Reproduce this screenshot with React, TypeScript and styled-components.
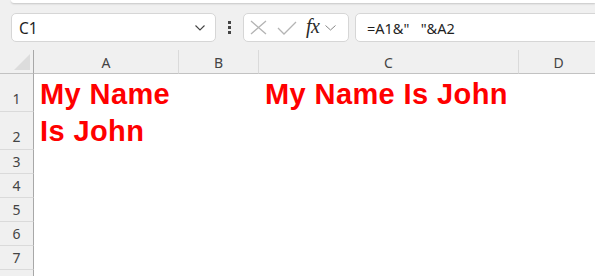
import React from "react";
import styled, { createGlobalStyle } from "styled-components";

const GlobalStyle = createGlobalStyle`
  html, body {
    margin: 0;
    padding: 0;
    background: #f0f0f0;
  }
`;

const COLUMNS = [
  { label: "A", width: 145 },
  { label: "B", width: 80 },
  { label: "C", width: 260 },
  { label: "D", width: 80 },
];

const ROWS = [
  { label: "1", height: 38 },
  { label: "2", height: 38 },
  { label: "3", height: 24 },
  { label: "4", height: 24 },
  { label: "5", height: 24 },
  { label: "6", height: 24 },
  { label: "7", height: 24 },
  { label: "", height: 24 },
];

const CELLS: Record<string, string> = {
  A1: "My Name",
  A2: "Is John",
  C1: "My Name Is John",
};

export default function App() {
  return (
    <>
      <GlobalStyle />
      <Page>
        <RibbonEdge />
        <Toolbar>
          <NameBox>
            <NameText>C1</NameText>
            <Chevron width="10" height="6" viewBox="0 0 10 6">
              <path d="M0.5 0.5 L5 5 L9.5 0.5" fill="none" stroke="#444" strokeWidth="1.1" />
            </Chevron>
          </NameBox>
          <Dots>
            <Dot />
            <Dot />
            <Dot />
          </Dots>
          <FxBox>
            <svg width="17" height="15" viewBox="0 0 17 15">
              <path d="M1 1 L16 14 M16 1 L1 14" stroke="#b4b4b4" strokeWidth="1.3" fill="none" />
            </svg>
            <svg width="20" height="14" viewBox="0 0 20 14">
              <path d="M1 7 L7 13 L19 1" stroke="#b4b4b4" strokeWidth="1.3" fill="none" />
            </svg>
            <FxLabel>fx</FxLabel>
            <svg width="11" height="6" viewBox="0 0 11 6">
              <path d="M0.5 0.5 L5.5 5 L10.5 0.5" fill="none" stroke="#888" strokeWidth="1" />
            </svg>
          </FxBox>
          <FormulaBar>=A1&amp;"&nbsp;&nbsp;&nbsp;"&amp;A2</FormulaBar>
        </Toolbar>

        <Sheet>
          <Corner>
            <CornerTriangle />
          </Corner>
          {COLUMNS.map((c) => (
            <ColHeader key={c.label} $w={c.width}>
              {c.label}
            </ColHeader>
          ))}

          {ROWS.map((r, i) => (
            <Row key={i} $h={r.height}>
              <RowHeader $tall={r.height > 30}>{r.label}</RowHeader>
              {COLUMNS.map((c) => {
                const text = CELLS[c.label + r.label];
                return (
                  <Cell key={c.label} $w={c.width} $pad={r.label === "2" ? 2 : 1}>
                    {text && <CellText>{text}</CellText>}
                  </Cell>
                );
              })}
            </Row>
          ))}
        </Sheet>
      </Page>
    </>
  );
}

const Page = styled.div`
  width: 595px;
  height: 276px;
  overflow: hidden;
  background: #f0f0f0;
  font-family: "Segoe UI", "Noto Sans", "Open Sans", sans-serif;
`;

const RibbonEdge = styled.div`
  height: 3px;
  margin-left: 11px;
  background: #ffffff;
  border-bottom-left-radius: 6px;
  box-shadow: 0 1px 2px rgba(0, 0, 0, 0.18);
`;

const Toolbar = styled.div`
  display: flex;
  align-items: center;
  height: 29px;
  margin-top: 10px;
  padding-left: 11px;
`;

const NameBox = styled.div`
  box-sizing: border-box;
  width: 205px;
  height: 29px;
  background: #fff;
  border: 1px solid #d6d6d6;
  border-radius: 5px;
  display: flex;
  align-items: center;
  justify-content: space-between;
  padding: 0 10px 0 7px;
`;

const NameText = styled.span`
  font-size: 15.5px;
  color: #1f1f1f;
`;

const Chevron = styled.svg`
  display: block;
`;

const Dots = styled.div`
  width: 27px;
  display: flex;
  flex-direction: column;
  align-items: center;
  gap: 2px;
`;

const Dot = styled.span`
  width: 3px;
  height: 3px;
  background: #444;
`;

const FxBox = styled.div`
  box-sizing: border-box;
  width: 106px;
  height: 29px;
  background: #fff;
  border: 1px solid #d6d6d6;
  border-radius: 5px;
  display: flex;
  align-items: center;
  padding: 0 4px 0 6px;
  gap: 10px;

  svg:last-child {
    margin-left: -4px;
  }
`;

const FxLabel = styled.span`
  font-family: "Liberation Serif", "DejaVu Serif", serif;
  font-style: italic;
  font-size: 20px;
  color: #2a2a2a;
  margin-left: -1px;
  margin-top: -2px;
  letter-spacing: -0.5px;
`;

const FormulaBar = styled.div`
  box-sizing: border-box;
  flex: 1;
  height: 29px;
  margin-left: 6px;
  margin-right: -10px;
  background: #fff;
  border: 1px solid #d6d6d6;
  border-radius: 5px 0 0 5px;
  display: flex;
  align-items: center;
  padding-left: 11px;
  font-size: 14.5px;
  color: #1f1f1f;
  white-space: pre;
`;

const Sheet = styled.div`
  margin-top: 8px;
  display: flex;
  flex-wrap: wrap;
  width: 600px;
`;

const Corner = styled.div`
  box-sizing: border-box;
  width: 34px;
  height: 24px;
  border-right: 1px solid #a8a8a8;
  border-bottom: 1px solid #c2c2c2;
  display: flex;
  align-items: flex-end;
  justify-content: flex-end;
  padding: 0 3px 3px 0;
`;

const CornerTriangle = styled.div`
  width: 16px;
  height: 16px;
  background: #dcdcdc;
  clip-path: polygon(100% 0, 100% 100%, 0 100%);
`;

const ColHeader = styled.div<{ $w: number }>`
  box-sizing: border-box;
  width: ${(p) => p.$w}px;
  height: 24px;
  border-right: 1px solid #dadada;
  border-bottom: 1px solid #c2c2c2;
  display: flex;
  align-items: center;
  justify-content: center;
  font-size: 14px;
  color: #444;
  padding-top: 1px;
`;

const Row = styled.div<{ $h: number }>`
  display: flex;
  width: 100%;
  height: ${(p) => p.$h}px;
`;

const RowHeader = styled.div<{ $tall: boolean }>`
  box-sizing: border-box;
  width: 34px;
  flex-shrink: 0;
  border-right: 1px solid #a8a8a8;
  border-bottom: 1px solid #dadada;
  display: flex;
  align-items: flex-end;
  justify-content: center;
  padding-bottom: ${(p) => (p.$tall ? 3 : 2)}px;
  font-size: 14px;
  line-height: 18px;
  color: #444;
`;

const Cell = styled.div<{ $w: number; $pad: number }>`
  box-sizing: border-box;
  width: ${(p) => p.$w}px;
  flex-shrink: 0;
  background: #fff;
  display: flex;
  align-items: flex-end;
  padding: 0 0 ${(p) => p.$pad}px 6px;
  overflow: visible;
  white-space: nowrap;
`;

const CellText = styled.span`
  font-family: "Liberation Sans", Arial, sans-serif;
  font-weight: bold;
  font-size: 29px;
  letter-spacing: 0.4px;
  color: #ff0000;
`;
